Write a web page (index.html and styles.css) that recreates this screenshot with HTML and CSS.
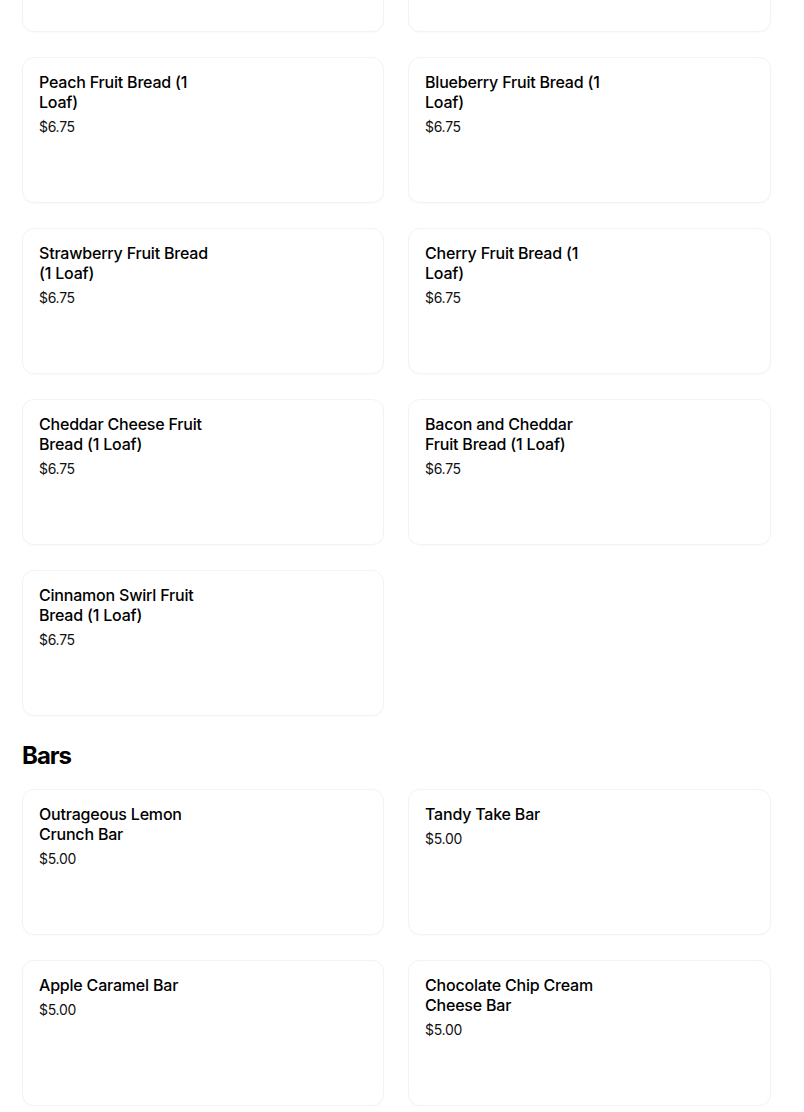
FILE: index.html
```html
<!DOCTYPE html>
<html lang="en">
<head>
<meta charset="utf-8">
<title>Menu</title>
<link rel="stylesheet" href="styles.css">
</head>
<body>
<main class="menu">
  <section class="section section-scrolled">
    <ul class="grid">
      <li class="card card-offscreen"></li>
      <li class="card card-offscreen"></li>
      <li class="card"><div class="info"><h3 class="name">Peach Fruit Bread (1 Loaf)</h3><p class="price">$6.75</p></div></li>
      <li class="card"><div class="info"><h3 class="name">Blueberry Fruit Bread (1 Loaf)</h3><p class="price">$6.75</p></div></li>
      <li class="card"><div class="info"><h3 class="name">Strawberry Fruit Bread (1 Loaf)</h3><p class="price">$6.75</p></div></li>
      <li class="card"><div class="info"><h3 class="name">Cherry Fruit Bread (1 Loaf)</h3><p class="price">$6.75</p></div></li>
      <li class="card"><div class="info"><h3 class="name">Cheddar Cheese Fruit Bread (1 Loaf)</h3><p class="price">$6.75</p></div></li>
      <li class="card"><div class="info"><h3 class="name">Bacon and Cheddar Fruit Bread (1 Loaf)</h3><p class="price">$6.75</p></div></li>
      <li class="card"><div class="info"><h3 class="name">Cinnamon Swirl Fruit Bread (1 Loaf)</h3><p class="price">$6.75</p></div></li>
    </ul>
  </section>
  <section class="section">
    <h2 class="section-title">Bars</h2>
    <ul class="grid">
      <li class="card"><div class="info"><h3 class="name">Outrageous Lemon Crunch Bar</h3><p class="price">$5.00</p></div></li>
      <li class="card"><div class="info"><h3 class="name">Tandy Take Bar</h3><p class="price">$5.00</p></div></li>
      <li class="card"><div class="info"><h3 class="name">Apple Caramel Bar</h3><p class="price">$5.00</p></div></li>
      <li class="card"><div class="info"><h3 class="name">Chocolate Chip Cream Cheese Bar</h3><p class="price">$5.00</p></div></li>
    </ul>
  </section>
</main>
</body>
</html>
```
FILE: styles.css
```css
html, body {
  margin: 0;
  padding: 0;
  background: #ffffff;
}

body {
  font-family: Inter, "Noto Sans", "Liberation Sans", sans-serif;
  color: #000000;
  overflow: hidden;
}

.menu {
  width: 749px;
  padding-left: 22px;
}

.section-scrolled {
  margin-top: -114px;
}

.grid {
  list-style: none;
  margin: 0;
  padding: 0;
  display: grid;
  grid-template-columns: 362px 363px;
  column-gap: 24px;
  row-gap: 25px;
}

.card {
  box-sizing: border-box;
  height: 146px;
  border: 1px solid #f3f3f3;
  border-radius: 12px;
  box-shadow: 0 1px 2px rgba(0, 0, 0, 0.025);
  padding: 14px 16px;
  background: #ffffff;
}

.info {
  max-width: 180px;
}

.name {
  margin: 0;
  font-size: 16px;
  line-height: 20px;
  font-weight: 500;
  letter-spacing: -0.2px;
}

.price {
  margin: 5px 0 0;
  font-size: 14px;
  line-height: 20px;
  font-weight: 400;
  letter-spacing: -0.3px;
  color: #111111;
}

.section-title {
  margin: 24px 0 17px;
  font-size: 24px;
  line-height: 32px;
  font-weight: 700;
  letter-spacing: -1px;
}
```
